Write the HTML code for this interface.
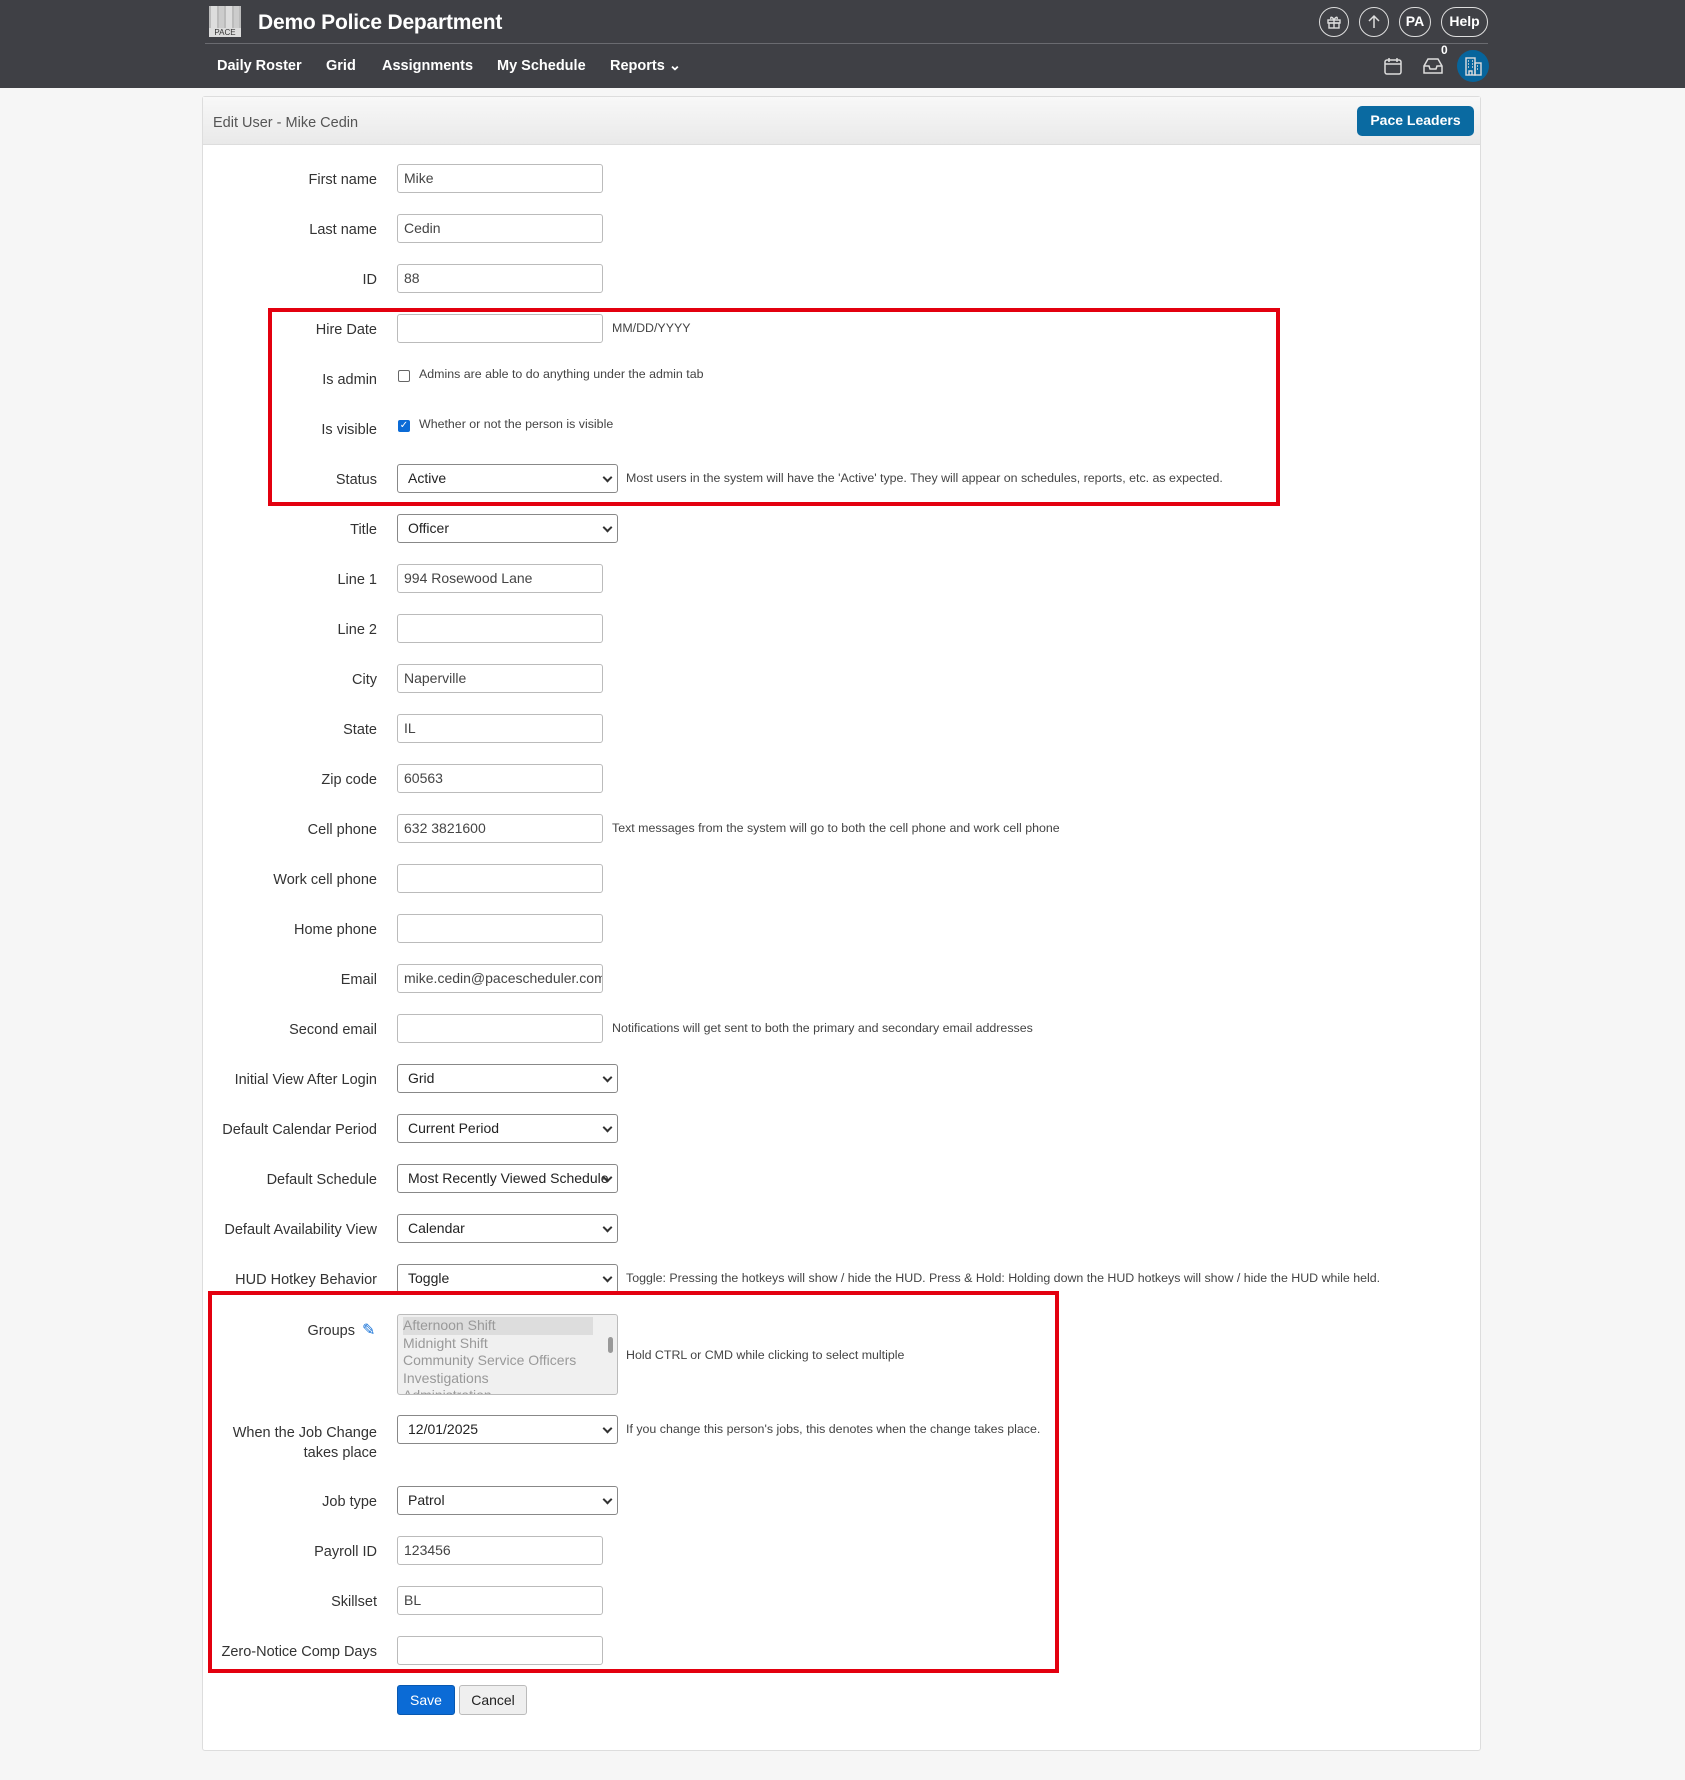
<!DOCTYPE html>
<html><head><meta charset="utf-8"><style>
*{box-sizing:border-box;margin:0;padding:0}
body{width:1685px;height:1780px;background:#f6f6f6;font-family:"Liberation Sans",sans-serif;position:relative;overflow:hidden;color:#333}
.top{position:absolute;left:0;top:0;width:1685px;height:88px;background:#3f4045}
.hl{position:absolute;left:205px;top:43px;width:1283px;height:1px;background:#6a6b70}
.title{position:absolute;left:258px;top:11px;color:#fff;font-size:21px;font-weight:bold;letter-spacing:-0.2px}
.nav{position:absolute;top:58px;color:#fff;font-size:14.5px;font-weight:bold}
.circ{position:absolute;top:7px;height:30px;border:1.5px solid #ddd;border-radius:15px;color:#fff;font-size:14px;font-weight:bold;text-align:center;line-height:27px}
.panel{position:absolute;left:202px;top:96px;width:1279px;height:1655px;background:#fff;border:1px solid #ddd;border-radius:3px}
.ph{position:absolute;left:0;top:0;width:100%;height:48px;background:linear-gradient(#f8f8f8,#e9e9e9);border-bottom:1px solid #ddd}
.l{position:absolute;left:0;width:377px;text-align:right;font-size:14.5px;color:#333;margin-top:3px}
.i{position:absolute;left:397px;width:206px;height:29px;border:1px solid #bbb;border-radius:3px;background:#fff;font-size:14px;padding:5px 6px;color:#444;white-space:nowrap;overflow:hidden}
.s{position:absolute;left:397px;width:221px;height:29px;border:1px solid #888;border-radius:3px;background:#fff;font-size:14px;padding:5px 10px;color:#222;white-space:nowrap;overflow:hidden}
.s:after{content:"";position:absolute;right:6px;top:9px;width:5px;height:5px;border-right:2px solid #333;border-bottom:2px solid #333;transform:rotate(45deg)}
.h{position:absolute;font-size:12.4px;color:#444;white-space:nowrap}
.red{position:absolute;border:4px solid #e3000f}
.btn{position:absolute;height:30px;border-radius:3px;font-size:14px;text-align:center;line-height:28px}
</style></head><body>
<div class="top">
 <div style="position:absolute;left:209px;top:6px;width:32px;height:31px;background:#bbb;display:flex;gap:2px;padding:0 2px">
  <div style="flex:1;background:#ddd"></div><div style="flex:1;background:#ccc"></div><div style="flex:1;background:#ddd"></div><div style="flex:1;background:#ccc"></div>
 </div>
 <div style="position:absolute;left:209px;top:28px;width:32px;font-size:8px;color:#333;background:#ddd;text-align:center;line-height:9px">PACE</div>
 <div class="title">Demo Police Department</div>
 <div class="hl"></div>
 <div class="nav" style="left:217px">Daily Roster</div>
 <div class="nav" style="left:326px">Grid</div>
 <div class="nav" style="left:382px">Assignments</div>
 <div class="nav" style="left:497px">My Schedule</div>
 <div class="nav" style="left:610px">Reports &#8964;</div>
 <div class="circ" style="left:1319px;width:30px"><svg width="16" height="16" viewBox="0 0 16 16" style="margin-top:6px" fill="none" stroke="#ddd" stroke-width="1.4"><rect x="2" y="6" width="12" height="3"/><rect x="3" y="9" width="10" height="5"/><path d="M8 6v8M8 6C6 2 4 3 5 5M8 6c2-4 4-3 3-1"/></svg></div>
 <div class="circ" style="left:1359px;width:30px"><svg width="16" height="16" viewBox="0 0 16 16" style="margin-top:6px" fill="none" stroke="#ddd" stroke-width="1.5"><path d="M8 14V2M3 7l5-5 5 5"/></svg></div>
 <div class="circ" style="left:1399px;width:32px">PA</div>
 <div class="circ" style="left:1441px;width:47px">Help</div>
 <svg style="position:absolute;left:1383px;top:56px" width="20" height="20" viewBox="0 0 20 20" fill="none" stroke="#ddd" stroke-width="1.5"><rect x="2" y="4" width="16" height="14" rx="2"/><path d="M2 8h16M6 2v4M14 2v4"/></svg>
 <svg style="position:absolute;left:1422px;top:56px" width="22" height="20" viewBox="0 0 22 20" fill="none" stroke="#ddd" stroke-width="1.5"><path d="M2 10l4-7h10l4 7v7H2zM2 10h5l1 3h6l1-3h5"/></svg>
 <div style="position:absolute;left:1441px;top:43px;color:#fff;font-size:12px;font-weight:bold">0</div>
 <div style="position:absolute;left:1457px;top:50px;width:32px;height:32px;border-radius:16px;background:#07659c"><svg width="32" height="32" viewBox="0 0 32 32" fill="none" stroke="#ddd" stroke-width="1.4"><rect x="9" y="8" width="9" height="17"/><rect x="18" y="13" width="6" height="12"/><path d="M11 11h1M15 11h1M11 14h1M15 14h1M11 17h1M15 17h1M20 16h1M20 19h1M12 25v-4h3v4"/></svg></div>
</div>
<div class="panel">
 <div class="ph"></div>
 <div style="position:absolute;left:10px;top:18px;font-size:14.5px;color:#555">Edit User - Mike Cedin</div>
 <div class="btn" style="left:1154px;top:9px;width:117px;background:#0a6aa1;color:#fff;font-weight:bold;border-radius:5px">Pace Leaders</div>
</div>

<div class="l" style="top:169px">First name</div><div class="i" style="top:164px">Mike</div>
<div class="l" style="top:219px">Last name</div><div class="i" style="top:214px">Cedin</div>
<div class="l" style="top:269px">ID</div><div class="i" style="top:264px">88</div>
<div class="l" style="top:319px">Hire Date</div><div class="i" style="top:314px"></div><div class="h" style="left:612px;top:321px">MM/DD/YYYY</div>
<div class="l" style="top:369px">Is admin</div><div style="position:absolute;left:398px;top:370px;width:12px;height:12px;border:1px solid #666;border-radius:2px"></div><div class="h" style="left:419px;top:367px">Admins are able to do anything under the admin tab</div>
<div class="l" style="top:419px">Is visible</div><div style="position:absolute;left:398px;top:420px;width:12px;height:12px;background:#0b6bd6;border-radius:2px;color:#fff;font-size:10px;line-height:12px;text-align:center">✓</div><div class="h" style="left:419px;top:417px">Whether or not the person is visible</div>
<div class="l" style="top:469px">Status</div><div class="s" style="top:464px">Active</div><div class="h" style="left:626px;top:471px">Most users in the system will have the 'Active' type. They will appear on schedules, reports, etc. as expected.</div>
<div class="l" style="top:519px">Title</div><div class="s" style="top:514px">Officer</div>
<div class="l" style="top:569px">Line 1</div><div class="i" style="top:564px">994 Rosewood Lane</div>
<div class="l" style="top:619px">Line 2</div><div class="i" style="top:614px"></div>
<div class="l" style="top:669px">City</div><div class="i" style="top:664px">Naperville</div>
<div class="l" style="top:719px">State</div><div class="i" style="top:714px">IL</div>
<div class="l" style="top:769px">Zip code</div><div class="i" style="top:764px">60563</div>
<div class="l" style="top:819px">Cell phone</div><div class="i" style="top:814px">632 3821600</div><div class="h" style="left:612px;top:821px">Text messages from the system will go to both the cell phone and work cell phone</div>
<div class="l" style="top:869px">Work cell phone</div><div class="i" style="top:864px"></div>
<div class="l" style="top:919px">Home phone</div><div class="i" style="top:914px"></div>
<div class="l" style="top:969px">Email</div><div class="i" style="top:964px">mike.cedin@pacescheduler.com</div>
<div class="l" style="top:1019px">Second email</div><div class="i" style="top:1014px"></div><div class="h" style="left:612px;top:1021px">Notifications will get sent to both the primary and secondary email addresses</div>
<div class="l" style="top:1069px">Initial View After Login</div><div class="s" style="top:1064px">Grid</div>
<div class="l" style="top:1119px">Default Calendar Period</div><div class="s" style="top:1114px">Current Period</div>
<div class="l" style="top:1169px">Default Schedule</div><div class="s" style="top:1164px">Most Recently Viewed Schedule</div>
<div class="l" style="top:1219px">Default Availability View</div><div class="s" style="top:1214px">Calendar</div>
<div class="l" style="top:1269px">HUD Hotkey Behavior</div><div class="s" style="top:1264px">Toggle</div><div class="h" style="left:626px;top:1271px">Toggle: Pressing the hotkeys will show / hide the HUD. Press &amp; Hold: Holding down the HUD hotkeys will show / hide the HUD while held.</div>
<div class="l" style="top:1320px;width:355px">Groups</div><div style="position:absolute;left:362px;top:1320px;color:#0b6bd6;font-size:16px">✎</div>
<div style="position:absolute;left:397px;top:1314px;width:221px;height:81px;border:1px solid #bbb;border-radius:3px;background:#f0f0f0;overflow:hidden;font-size:14px;color:#999;line-height:17.5px;padding:2px 0 0 5px">
 <div style="background:#ddd;width:190px">Afternoon Shift</div><div>Midnight Shift</div><div>Community Service Officers</div><div>Investigations</div><div>Administration</div>
 <div style="position:absolute;right:4px;top:22px;width:5px;height:16px;background:#999;border-radius:3px"></div>
</div>
<div class="h" style="left:626px;top:1348px">Hold CTRL or CMD while clicking to select multiple</div>
<div class="l" style="top:1420px;line-height:20px">When the Job Change<br>takes place</div><div class="s" style="top:1415px">12/01/2025</div><div class="h" style="left:626px;top:1422px">If you change this person's jobs, this denotes when the change takes place.</div>
<div class="l" style="top:1491px">Job type</div><div class="s" style="top:1486px">Patrol</div>
<div class="l" style="top:1541px">Payroll ID</div><div class="i" style="top:1536px">123456</div>
<div class="l" style="top:1591px">Skillset</div><div class="i" style="top:1586px">BL</div>
<div class="l" style="top:1641px">Zero-Notice Comp Days</div><div class="i" style="top:1636px"></div>
<div class="btn" style="left:397px;top:1685px;width:58px;background:#0b6bd6;color:#fff;border:1px solid #0858b0">Save</div>
<div class="btn" style="left:459px;top:1685px;width:68px;background:#efefef;color:#222;border:1px solid #bbb">Cancel</div>
<div class="red" style="left:268px;top:308px;width:1012px;height:198px"></div>
<div class="red" style="left:208px;top:1291px;width:851px;height:382px"></div>
</body></html>
